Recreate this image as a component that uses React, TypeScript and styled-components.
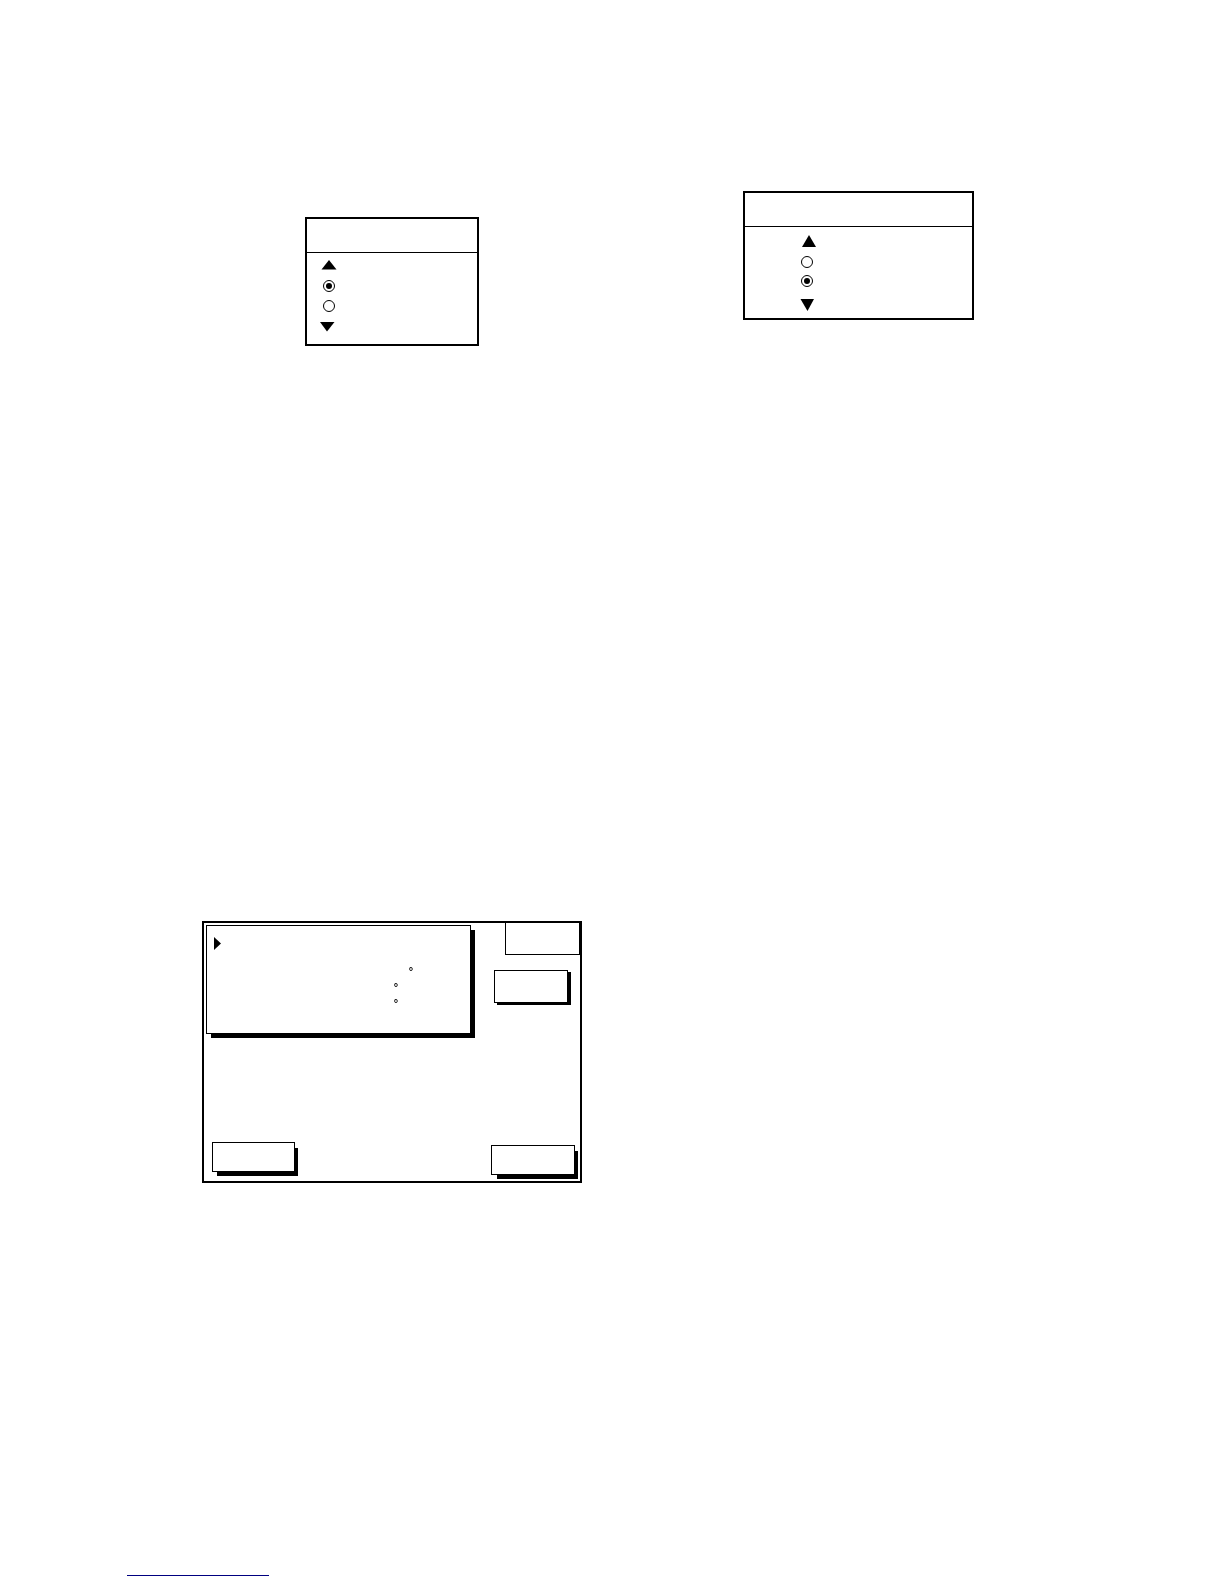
import React from "react";
import styled, { createGlobalStyle } from "styled-components";

const GlobalStyle = createGlobalStyle`
  *, *::before, *::after { box-sizing: border-box; }
  body {
    margin: 0;
    background: #fff;
    color: #000;
    font-family: "Liberation Sans", Arial, sans-serif;
  }
`;

const Page = styled.div`
  padding: 191px 0 8px;
`;

const Columns = styled.main`
  display: grid;
  grid-template-columns: 1fr 1fr;
  justify-items: center;
  align-items: start;
  row-gap: 575px;
  padding: 0 132px 0 159px;
`;

const Dialog = styled.section<{ $width: number; $drop?: number }>`
  width: ${(p) => p.$width}px;
  height: 129px;
  margin-top: ${(p) => p.$drop ?? 0}px;
  border: 2px solid #000;
`;

const DialogHeader = styled.header`
  height: 34px;
  border-bottom: 1px solid #000;
`;

const Options = styled.fieldset<{ $indent: number; $top: number }>`
  display: flex;
  flex-direction: column;
  align-items: center;
  width: 18px;
  margin: 0 0 0 ${(p) => p.$indent}px;
  padding: ${(p) => p.$top}px 0 0;
  border: 0;
  min-width: 0;
`;

const RadioList = styled.div<{ $gap: number; $above: number; $below: number }>`
  display: flex;
  flex-direction: column;
  gap: ${(p) => p.$gap}px;
  padding: ${(p) => p.$above}px 0 ${(p) => p.$below}px;
`;

const Radio = styled.input`
  appearance: none;
  display: grid;
  place-items: center;
  width: 12px;
  height: 12px;
  margin: 0;
  border: 1px solid #000;
  border-radius: 50%;
  background: #fff;
  &:checked::before {
    content: "";
    width: 6px;
    height: 6px;
    border-radius: 50%;
    background: #000;
  }
`;

const ArrowButton = styled.button`
  display: block;
  padding: 0;
  border: 0;
  background: none;
  svg { display: block; }
`;

const Device = styled.section`
  display: flex;
  flex-direction: column;
  justify-content: space-between;
  width: 380px;
  height: 262px;
  border: 2px solid #000;
`;

const TopRow = styled.div`
  display: flex;
  justify-content: space-between;
  align-items: flex-start;
`;

const KeyRow = styled.div`
  display: flex;
  justify-content: space-between;
  align-items: flex-end;
  padding: 0 5px 6px 8px;
`;

const Panel = styled.div`
  position: relative;
  z-index: 0;
  width: 265px;
  height: 109px;
  margin: 2px 0 0 2px;
  padding: 11px 0 0 7px;
  border: 1px solid #000;
  &::before {
    content: "";
    position: absolute;
    inset: 4px -5px -5px 4px;
    background: #000;
    z-index: -2;
  }
  &::after {
    content: "";
    position: absolute;
    inset: 0;
    background: #fff;
    z-index: -1;
  }
`;

const Cursor = styled.svg`
  display: block;
`;

const Readings = styled.ul`
  list-style: none;
  margin: 10px 0 0;
  padding: 0;
  will-change: opacity;
`;

const Reading = styled.li<{ $right: number }>`
  height: 16px;
  padding-right: ${(p) => p.$right}px;
  font-size: 11px;
  font-weight: bold;
  line-height: 22px;
  text-align: right;
`;

const Side = styled.div`
  display: flex;
  flex-direction: column;
  align-items: flex-end;
  gap: 15px;
`;

const Tab = styled.div`
  width: 75px;
  height: 32px;
  border: 1px solid #000;
  border-top: 0;
`;

const ModeButton = styled.button`
  width: 74px;
  height: 33px;
  margin-right: 12px;
  padding: 0;
  border: 1px solid #000;
  border-radius: 0;
  background: #fff;
  box-shadow: 3px 2px 0 #000;
`;

const SoftKey = styled.button<{ $width: number; $lift: number; $left: number }>`
  position: relative;
  z-index: 0;
  width: ${(p) => p.$width}px;
  height: 30px;
  margin-bottom: ${(p) => p.$lift}px;
  padding: 0;
  border: 1px solid #000;
  border-radius: 0;
  background: none;
  &::before {
    content: "";
    position: absolute;
    inset: 5px -4px -5px ${(p) => p.$left}px;
    background: #000;
    z-index: -2;
  }
  &::after {
    content: "";
    position: absolute;
    inset: 0;
    background: #fff;
    z-index: -1;
  }
`;

const Footer = styled.footer`
  padding: 392px 0 0 127px;
`;

const FooterLink = styled.a`
  display: block;
  width: 142px;
  border-bottom: 1px solid #000080;
`;

interface ArrowProps {
  label: string;
  height: number;
  points: string;
}

const Arrow = ({ label, height, points }: ArrowProps) => (
  <ArrowButton type="button" aria-label={label}>
    <svg width="18" height={height} viewBox={`0 0 18 ${height}`}>
      <polygon points={points} fill="#000" />
    </svg>
  </ArrowButton>
);

export default function App() {
  return (
    <>
      <GlobalStyle />
      <Page>
        <Columns>
          <Dialog $width={174} $drop={26}>
            <DialogHeader />
            <Options $indent={13} $top={7}>
              <Arrow label="Previous" height={10} points="1.5,9.5 16.5,9.5 9,0" />
              <RadioList $gap={8} $above={10} $below={10}>
                <Radio type="radio" name="first" aria-label="Option 1" defaultChecked />
                <Radio type="radio" name="first" aria-label="Option 2" />
              </RadioList>
              <Arrow label="Next" height={10} points="0,0 14.5,0 7,9.5" />
            </Options>
          </Dialog>
          <Dialog $width={231}>
            <DialogHeader />
            <Options $indent={53} $top={8}>
              <Arrow label="Previous" height={12} points="4,12 18,12 11,0" />
              <RadioList $gap={7} $above={9} $below={12}>
                <Radio type="radio" name="second" aria-label="Option 1" />
                <Radio type="radio" name="second" aria-label="Option 2" defaultChecked />
              </RadioList>
              <Arrow label="Next" height={12} points="2.5,0 16,0 9.5,12" />
            </Options>
          </Dialog>
          <Device>
            <TopRow>
              <Panel>
                <Cursor width="7" height="13" viewBox="0 0 7 13">
                  <polygon points="0,0 7,6.5 0,13" fill="#000" />
                </Cursor>
                <Readings>
                  <Reading $right={57}>°</Reading>
                  <Reading $right={72}>°</Reading>
                  <Reading $right={72}>°</Reading>
                </Readings>
              </Panel>
              <Side>
                <Tab />
                <ModeButton type="button" aria-label="Mode" />
              </Side>
            </TopRow>
            <KeyRow>
              <SoftKey type="button" aria-label="Left key" $width={83} $lift={3} $left={4} />
              <SoftKey type="button" aria-label="Right key" $width={84} $lift={0} $left={5} />
            </KeyRow>
          </Device>
        </Columns>
        <Footer>
          <FooterLink href="#" aria-label="Website" />
        </Footer>
      </Page>
    </>
  );
}
